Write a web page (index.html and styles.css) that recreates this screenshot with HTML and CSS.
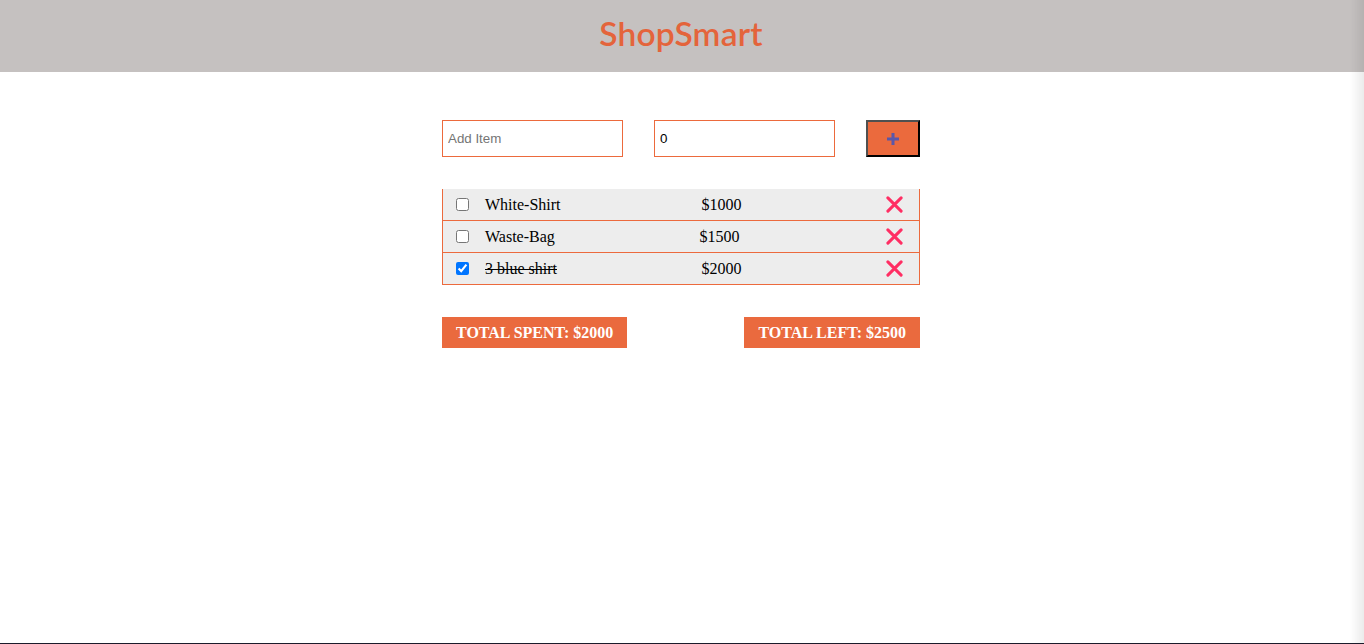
FILE: index.html
```html
<!DOCTYPE html>
<html lang="en">
<head>
<meta charset="utf-8">
<title>ShopSmart</title>
<link rel="stylesheet" href="styles.css">
</head>
<body>
<header class="topbar">
  <h1 class="brand">ShopSmart</h1>
</header>
<main class="app">
  <form class="add-row">
    <input class="field" type="text" placeholder="Add Item">
    <input class="field" type="text" value="0">
    <button class="add-btn" type="button" aria-label="Add">
      <svg width="14" height="14" viewBox="0 0 14 14"><path d="M7 1v12M1 7h12" stroke="#5b57a8" stroke-width="3" fill="none"/></svg>
    </button>
  </form>
  <ul class="list">
    <li class="item">
      <input class="check" type="checkbox">
      <span class="name">White-Shirt</span>
      <span class="price">$1000</span>
      <span class="del"><svg width="17" height="17" viewBox="0 0 18 18"><path d="M2 2l14 14M16 2L2 16" stroke="#ff2e63" stroke-width="3.2" stroke-linecap="round" fill="none"/></svg></span>
    </li>
    <li class="item">
      <input class="check" type="checkbox">
      <span class="name">Waste-Bag</span>
      <span class="price shift">$1500</span>
      <span class="del"><svg width="17" height="17" viewBox="0 0 18 18"><path d="M2 2l14 14M16 2L2 16" stroke="#ff2e63" stroke-width="3.2" stroke-linecap="round" fill="none"/></svg></span>
    </li>
    <li class="item">
      <input class="check" type="checkbox" checked>
      <span class="name done">3 blue shirt</span>
      <span class="price">$2000</span>
      <span class="del"><svg width="17" height="17" viewBox="0 0 18 18"><path d="M2 2l14 14M16 2L2 16" stroke="#ff2e63" stroke-width="3.2" stroke-linecap="round" fill="none"/></svg></span>
    </li>
  </ul>
  <div class="totals">
    <div class="total">Total Spent: $2000</div>
    <div class="total">Total Left: $2500</div>
  </div>
</main>
<div class="edge-shadow"></div>
<div class="bottom-line"></div>
</body>
</html>
```
FILE: styles.css
```css
html, body {
  margin: 0;
  padding: 0;
  height: 100%;
  background: #ffffff;
}
body {
  font-family: "Liberation Serif", "Times New Roman", serif;
  font-size: 16px;
  color: #000;
  padding-right: 2px;
  box-sizing: border-box;
}
.topbar {
  height: 72px;
  background: #c5c1c0;
  display: flex;
  align-items: center;
  justify-content: center;
  margin-right: -2px;
  padding-right: 2px;
}
.brand {
  margin: 0 0 4px;
  font-family: "Lato", "Open Sans", sans-serif;
  font-weight: 600;
  font-size: 33.5px;
  color: #e4643b;
  letter-spacing: 0.2px;
  line-height: 1;
}
.app {
  width: 478px;
  margin: 48px auto 0;
}
.add-row {
  display: flex;
  justify-content: space-between;
  height: 37px;
  margin: 0;
}
.field {
  box-sizing: border-box;
  width: 181px;
  height: 37px;
  border: 1px solid #ec6a3d;
  padding: 0 5px;
  font-family: "Liberation Sans", Arial, sans-serif;
  font-size: 13.33px;
  color: #000;
  outline: none;
  margin: 0;
}
.field::placeholder {
  color: #757575;
}
.add-btn {
  box-sizing: border-box;
  width: 54px;
  height: 37px;
  margin: 0;
  background: #eb6a3d;
  border: 2px solid;
  border-color: #505050 #000 #000 #505050;
  display: flex;
  align-items: center;
  justify-content: center;
  padding: 0;
}
.list {
  list-style: none;
  margin: 32px 0 0;
  padding: 0;
}
.item {
  box-sizing: border-box;
  height: 32px;
  background: #ededed;
  border: 1px solid #ec6a3d;
  border-top: none;
  display: grid;
  grid-template-columns: 42px 190px 92px 1fr;
  align-items: center;
}
.check {
  margin: 0 0 0 13px;
  width: 13px;
  height: 13px;
}
.name {
  white-space: nowrap;
}
.done {
  text-decoration: line-through;
}
.price {
  text-align: center;
  padding-left: 1px;
}
.price.shift {
  padding-left: 0;
  padding-right: 3px;
}
.del {
  justify-self: end;
  margin-right: 16px;
  display: flex;
}
.totals {
  display: flex;
  justify-content: space-between;
  margin-top: 32px;
}
.total {
  height: 31px;
  line-height: 31px;
  background: #ea6a3e;
  color: #fff;
  font-weight: bold;
  text-transform: uppercase;
  padding: 0 14px;
  white-space: nowrap;
}
.edge-shadow {
  position: fixed;
  top: 0;
  right: 0;
  width: 14px;
  height: 100%;
  background: linear-gradient(to right, rgba(0,0,0,0), rgba(0,0,0,0.08));
  pointer-events: none;
}
.bottom-line {
  position: fixed;
  left: 0;
  right: 0;
  bottom: 0;
  height: 1px;
  background: #1b1b2b;
}
```
